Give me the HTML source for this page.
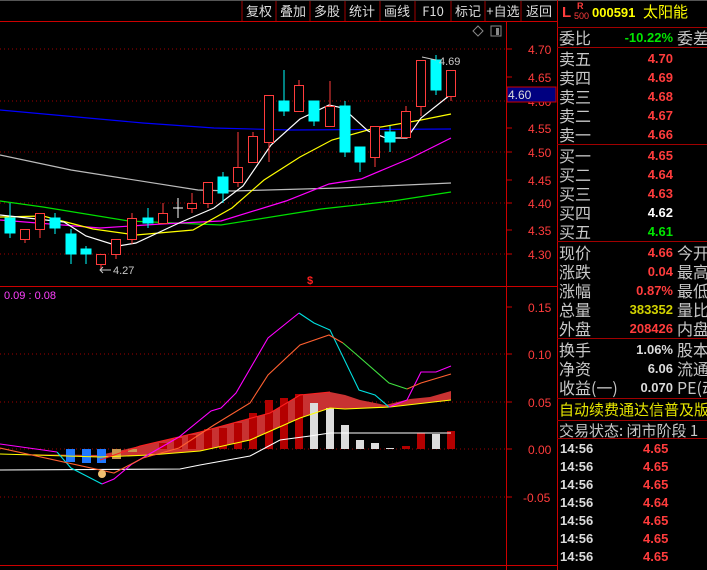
<!DOCTYPE html>
<html><head><meta charset="utf-8"><style>
body{margin:0;background:#000;width:707px;height:570px;overflow:hidden;position:relative;font-family:"Liberation Sans","Noto Sans CJK SC",sans-serif}
div{white-space:nowrap}
.t{position:absolute;white-space:nowrap}
.lb{position:absolute;left:559px;color:#c8c8c8;font-size:16px;line-height:19px;font-family:"Noto Sans CJK SC","WenQuanYi Zen Hei",sans-serif}
.v{position:absolute;right:34px;font-size:13px;font-weight:bold;line-height:19px;font-family:"Liberation Sans",sans-serif;text-align:right}
.c3{position:absolute;left:677px;width:60px;color:#c8c8c8;font-size:16px;line-height:19px;font-family:"Noto Sans CJK SC",sans-serif}
.r{color:#ff3c3c}.g{color:#00e600}.w{color:#fff}.y{color:#e6e600}
.hl{position:absolute;left:557px;width:150px;height:1px;background:#a00000}
</style></head><body>
<svg width="707" height="570" style="position:absolute;left:0;top:0" font-family="Liberation Sans,sans-serif">
<line x1="0" y1="0.5" x2="707" y2="0.5" stroke="#555"/>
<line x1="0" y1="21.5" x2="557" y2="21.5" stroke="#c00"/>
<g stroke="#a00000"><line x1="242" y1="1" x2="242" y2="21"/><line x1="276" y1="1" x2="276" y2="21"/><line x1="310" y1="1" x2="310" y2="21"/><line x1="345" y1="1" x2="345" y2="21"/><line x1="380" y1="1" x2="380" y2="21"/><line x1="415" y1="1" x2="415" y2="21"/><line x1="451" y1="1" x2="451" y2="21"/><line x1="485" y1="1" x2="485" y2="21"/><line x1="521" y1="1" x2="521" y2="21"/></g>
<g fill="#dcdcdc" font-size="13" font-family="Noto Sans CJK SC,sans-serif" text-anchor="middle">
<text x="259" y="16">复权</text><text x="293" y="16">叠加</text><text x="327" y="16">多股</text><text x="362" y="16">统计</text><text x="397" y="16">画线</text><text x="433" y="16">F10</text><text x="468" y="16">标记</text><text x="503" y="16">+自选</text><text x="539" y="16">返回</text></g>
<line x1="557.5" y1="0" x2="557.5" y2="570" stroke="#c00"/>
<line x1="506.5" y1="22" x2="506.5" y2="570" stroke="#c00"/>
<line x1="0" y1="286.5" x2="557" y2="286.5" stroke="#c00"/>
<line x1="0" y1="565.5" x2="557" y2="565.5" stroke="#c00"/>
<g stroke="#a00000" stroke-dasharray="1,3"><line x1="0" y1="49" x2="506" y2="49"/><line x1="0" y1="101" x2="506" y2="101"/><line x1="0" y1="152" x2="506" y2="152"/><line x1="0" y1="203" x2="506" y2="203"/><line x1="0" y1="254" x2="506" y2="254"/>
<line x1="0" y1="354" x2="506" y2="354"/><line x1="0" y1="402" x2="506" y2="402"/><line x1="0" y1="449" x2="506" y2="449"/><line x1="0" y1="497" x2="506" y2="497"/></g>
<g stroke="#c00"><line x1="507" y1="49" x2="512" y2="49"/><line x1="507" y1="77" x2="512" y2="77"/><line x1="507" y1="128" x2="512" y2="128"/><line x1="507" y1="152" x2="512" y2="152"/><line x1="507" y1="180" x2="512" y2="180"/><line x1="507" y1="203" x2="512" y2="203"/><line x1="507" y1="230" x2="512" y2="230"/><line x1="507" y1="254" x2="512" y2="254"/>
<line x1="507" y1="307" x2="512" y2="307"/><line x1="507" y1="354" x2="512" y2="354"/><line x1="507" y1="402" x2="512" y2="402"/><line x1="507" y1="449" x2="512" y2="449"/><line x1="507" y1="497" x2="512" y2="497"/></g>
<g fill="#ff3c3c" font-size="12"><text x="528" y="54">4.70</text><text x="528" y="82">4.65</text><text x="528" y="106">4.60</text><text x="528" y="133">4.55</text><text x="528" y="157">4.50</text><text x="528" y="185">4.45</text><text x="528" y="208">4.40</text><text x="528" y="235">4.35</text><text x="528" y="259">4.30</text>
<text x="528" y="312">0.15</text><text x="528" y="359">0.10</text><text x="528" y="407">0.05</text><text x="528" y="454">0.00</text><text x="523" y="502">-0.05</text></g>
<rect x="507" y="87" width="49" height="15" fill="#000080" stroke="#c00"/>
<text x="508" y="99" fill="#dcdcdc" font-size="12">4.60</text>
<path d="M478 26 L483 31 L478 36 L473 31Z" fill="none" stroke="#888"/>
<rect x="491" y="26" width="10" height="10" fill="none" stroke="#888"/><rect x="496" y="28" width="3" height="7" fill="#888"/>
<g fill="none" stroke-width="1.2">
<polyline stroke="#0000ff" points="0,110 143,123 214,128 290,130 451,129"/>
<polyline stroke="#bbb" points="0,155 71,170 198,190 232,191 339,188 451,183"/>
<polyline stroke="#00e000" points="0,201 43,207 129,221 221,225 321,209 393,201 451,192"/>
<polyline stroke="#ff00ff" points="0,220 100,228 161,224 221,221 286,201 329,184 361,179 411,158 451,138"/>
<polyline stroke="#ffff00" points="0,217 43,216 93,229 136,235 193,230 232,208 264,180 300,157 332,140 375,128 421,120 451,114"/>
<polyline stroke="#fff" points="0,215 64,222 86,236 118,246 136,243 179,223 214,208 243,186 271,145 300,119 329,105 343,108 368,131 386,138 407,138 421,118 450,95"/>
</g>
<g stroke-width="1">
<g stroke="#00ffff" fill="#00ffff">
<line x1="10" y1="203" x2="10" y2="238"/><rect x="5" y="218" width="10" height="15"/>
<line x1="55" y1="213" x2="55" y2="234"/><rect x="50" y="218" width="10" height="10"/>
<line x1="71" y1="229" x2="71" y2="264"/><rect x="66" y="234" width="10" height="20"/>
<line x1="86" y1="246" x2="86" y2="264"/><rect x="81" y="249" width="10" height="5"/>
<line x1="148" y1="208" x2="148" y2="228"/><rect x="143" y="218" width="10" height="5"/>
<line x1="223" y1="172" x2="223" y2="203"/><rect x="218" y="177" width="10" height="16"/>
<line x1="284" y1="70" x2="284" y2="116"/><rect x="279" y="101" width="10" height="10"/>
<line x1="314" y1="101" x2="314" y2="126"/><rect x="309" y="101" width="10" height="20"/>
<line x1="345" y1="101" x2="345" y2="157"/><rect x="340" y="106" width="10" height="46"/>
<line x1="360" y1="147" x2="360" y2="172"/><rect x="355" y="147" width="10" height="15"/>
<line x1="390" y1="126" x2="390" y2="152"/><rect x="385" y="132" width="10" height="10"/>
<line x1="436" y1="55" x2="436" y2="95"/><rect x="431" y="60" width="10" height="30"/>
</g>
<g stroke="#ff3c3c" fill="#000">
<line x1="25" y1="239" x2="25" y2="243"/><rect x="20.5" y="229.5" width="9" height="10"/>
<line x1="40" y1="229" x2="40" y2="238"/><rect x="35.5" y="213.5" width="9" height="16"/>
<line x1="101" y1="264" x2="101" y2="270"/><rect x="96.5" y="254.5" width="9" height="10"/>
<line x1="116" y1="254" x2="116" y2="259"/><rect x="111.5" y="239.5" width="9" height="15"/>
<line x1="132" y1="213" x2="132" y2="244"/><rect x="127.5" y="218.5" width="9" height="21"/>
<line x1="163" y1="203" x2="163" y2="213"/><rect x="158.5" y="213.5" width="9" height="10"/>
<line x1="192" y1="193" x2="192" y2="213"/><rect x="187.5" y="203.5" width="9" height="5"/>
<line x1="208" y1="182" x2="208" y2="208"/><rect x="203.5" y="182.5" width="9" height="21"/>
<line x1="238" y1="132" x2="238" y2="187"/><rect x="233.5" y="167.5" width="9" height="15"/>
<line x1="253" y1="132" x2="253" y2="162"/><rect x="248.5" y="136.5" width="9" height="26"/>
<line x1="269" y1="95" x2="269" y2="162"/><rect x="264.5" y="95.5" width="9" height="47"/>
<line x1="299" y1="80" x2="299" y2="111"/><rect x="294.5" y="85.5" width="9" height="26"/>
<line x1="330" y1="81" x2="330" y2="126"/><rect x="325.5" y="106.5" width="9" height="20"/>
<line x1="375" y1="126" x2="375" y2="167"/><rect x="370.5" y="126.5" width="9" height="31"/>
<line x1="406" y1="106" x2="406" y2="137"/><rect x="401.5" y="111.5" width="9" height="26"/>
<line x1="421" y1="60" x2="421" y2="116"/><rect x="416.5" y="60.5" width="9" height="46"/>
<line x1="451" y1="70" x2="451" y2="101"/><rect x="446.5" y="70.5" width="9" height="26"/>
</g>
<g stroke="#fff"><line x1="178" y1="198" x2="178" y2="218"/><line x1="173" y1="208" x2="183" y2="208"/></g>
</g>
<text x="113" y="274" fill="#c8c8c8" font-size="11">4.27</text>
<path d="M111 270 L100 270 M103 267 L100 270 L103 273" stroke="#c8c8c8" fill="none"/>
<text x="439" y="65" fill="#c8c8c8" font-size="11">4.69</text>
<path d="M422 57 L436 60" stroke="#c8c8c8"/>
<text x="307" y="284" fill="#ff2020" font-size="11" font-weight="bold">$</text>
<text x="4" y="299" fill="#ff40ff" font-size="11">0.09 : 0.08</text>
<path d="M0,454 L100,457 L150,455 L200,451 L250,440 L300,418 L330,408 L345,409 L390,407 L451,400 L451,391 L430,397 L410,399 L385,405 L360,400 L345,395 L330,392 L300,395 L270,413 L200,432 L140,446 L100,455 Z" fill="#c83232"/>
<g>
<rect x="66" y="449" width="9" height="13" fill="#1e78ff"/><rect x="82" y="449" width="9" height="14" fill="#1e78ff"/><rect x="97" y="449" width="9" height="14" fill="#1e78ff"/>
<rect x="112" y="449" width="9" height="10" fill="#c89650"/><rect x="128" y="449" width="9" height="3" fill="#c89650"/>
<g fill="#b40000">
<rect x="159" y="443" width="8" height="6"/><rect x="174" y="438" width="8" height="11"/><rect x="188" y="435" width="8" height="14"/><rect x="204" y="429" width="8" height="20"/><rect x="219" y="428" width="8" height="21"/><rect x="234" y="423" width="8" height="26"/><rect x="249" y="413" width="8" height="36"/><rect x="265" y="400" width="8" height="49"/><rect x="280" y="398" width="8" height="51"/><rect x="295" y="394" width="8" height="55"/><rect x="402" y="446" width="8" height="3"/><rect x="417" y="433" width="8" height="16"/><rect x="447" y="431" width="8" height="18"/></g>
<g fill="#dcdcdc"><rect x="310" y="403" width="8" height="46"/><rect x="326" y="408" width="8" height="41"/><rect x="341" y="425" width="8" height="24"/><rect x="356" y="440" width="8" height="9"/><rect x="371" y="443" width="8" height="6"/><rect x="386" y="448" width="8" height="1"/><rect x="432" y="434" width="8" height="15"/></g>
</g>
<g fill="none" stroke-width="1.1">
<polyline stroke="#ffff00" points="0,454 100,457 150,455 200,451 250,440 300,418 330,408 345,409 390,407 451,400"/>
<polyline stroke="#ff2020" points="100,460 140,446 200,432 270,413 300,395 330,392"/>
<polyline stroke="#fff" points="0,470 180,469 200,465 250,456 280,440 310,436 330,433 451,433"/>
<polyline stroke="#ff00ff" points="0,444 43,450 57,452"/>
<polyline stroke="#00e0e0" points="57,452 71,468 102,484"/>
<polyline stroke="#ff00ff" points="102,484 114,479 132,464 179,437 211,411 221,408 236,393 268,338 299,313"/>
<polyline stroke="#00e0e0" points="299,313 314,323 330,330 359,390 375,395 389,407"/>
<polyline stroke="#ff00ff" points="389,407 407,400 421,372 436,372 451,366"/>
<polyline stroke="#ff6030" points="0,448 114,473 143,458 179,448 214,425 250,403 268,375 300,345 329,335 343,343"/>
<polyline stroke="#40e040" points="343,343 357,355 389,383 407,389"/>
<polyline stroke="#ff6030" points="407,389 421,383 451,374"/>
</g>
<circle cx="102" cy="474" r="4" fill="#f0c070"/>
</svg>
<div class="t" style="left:562px;top:4px;color:#ff3c3c;font-size:15px;font-weight:bold">L</div>
<div class="t" style="left:577px;top:2px;color:#ff3c3c;font-size:9px;font-weight:bold;line-height:9px">R</div>
<div class="t" style="left:574px;top:11px;color:#ff3c3c;font-size:9px;line-height:10px">500</div>
<div class="t" style="left:592px;top:5px;color:#ffff00;font-size:13px;font-weight:bold">000591</div>
<div class="t" style="left:643px;top:3px;color:#ffff00;font-size:15px;font-family:'Noto Sans CJK SC',sans-serif;line-height:18px">太阳能</div>
<div class="hl" style="top:27px"></div>
<div class="lb" style="top:28px">委比</div><div class="v g" style="top:28px">-10.22%</div><div class="c3" style="top:28px">委差</div>
<div class="hl" style="top:47px"></div>
<div class="lb" style="top:49px">卖五</div><div class="v r" style="top:49px">4.70</div>
<div class="lb" style="top:68px">卖四</div><div class="v r" style="top:68px">4.69</div>
<div class="lb" style="top:87px">卖三</div><div class="v r" style="top:87px">4.68</div>
<div class="lb" style="top:106px">卖二</div><div class="v r" style="top:106px">4.67</div>
<div class="lb" style="top:125px">卖一</div><div class="v r" style="top:125px">4.66</div>
<div class="hl" style="top:144px"></div>
<div class="lb" style="top:146px">买一</div><div class="v r" style="top:146px">4.65</div>
<div class="lb" style="top:165px">买二</div><div class="v r" style="top:165px">4.64</div>
<div class="lb" style="top:184px">买三</div><div class="v r" style="top:184px">4.63</div>
<div class="lb" style="top:203px">买四</div><div class="v w" style="top:203px">4.62</div>
<div class="lb" style="top:222px">买五</div><div class="v g" style="top:222px">4.61</div>
<div class="hl" style="top:241px"></div>
<div class="lb" style="top:243px">现价</div><div class="v r" style="top:243px">4.66</div><div class="c3" style="top:243px">今开</div>
<div class="lb" style="top:262px">涨跌</div><div class="v r" style="top:262px">0.04</div><div class="c3" style="top:262px">最高</div>
<div class="lb" style="top:281px">涨幅</div><div class="v r" style="top:281px">0.87%</div><div class="c3" style="top:281px">最低</div>
<div class="lb" style="top:300px">总量</div><div class="v y" style="top:300px;color:#d2d200">383352</div><div class="c3" style="top:300px">量比</div>
<div class="lb" style="top:319px">外盘</div><div class="v r" style="top:319px">208426</div><div class="c3" style="top:319px">内盘</div>
<div class="hl" style="top:338px"></div>
<div class="lb" style="top:340px">换手</div><div class="v" style="top:340px;color:#dcdcdc">1.06%</div><div class="c3" style="top:340px">股本</div>
<div class="lb" style="top:359px">净资</div><div class="v" style="top:359px;color:#dcdcdc">6.06</div><div class="c3" style="top:359px">流通</div>
<div class="lb" style="top:378px">收益(一)</div><div class="v" style="top:378px;color:#dcdcdc">0.070</div><div class="c3" style="top:378px">PE(动</div>
<div class="hl" style="top:398px"></div>
<div class="lb" style="top:400px;color:#e6e600;font-size:15px;width:200px">自动续费通达信普及版</div>
<div class="hl" style="top:420px"></div>
<div class="lb" style="top:421px;font-size:15px;width:200px">交易状态: 闭市阶段 1</div>
<div class="hl" style="top:438px"></div>
<div class="t" style="left:560px;top:440px;color:#dcdcdc;font-size:13px;font-weight:bold;line-height:18px">14:56<br>14:56<br>14:56<br>14:56<br>14:56<br>14:56<br>14:56</div>
<div class="t" style="left:643px;top:440px;color:#ff3c3c;font-size:13px;font-weight:bold;line-height:18px">4.65<br>4.65<br>4.65<br>4.64<br>4.65<br>4.65<br>4.65</div>
</body></html>
